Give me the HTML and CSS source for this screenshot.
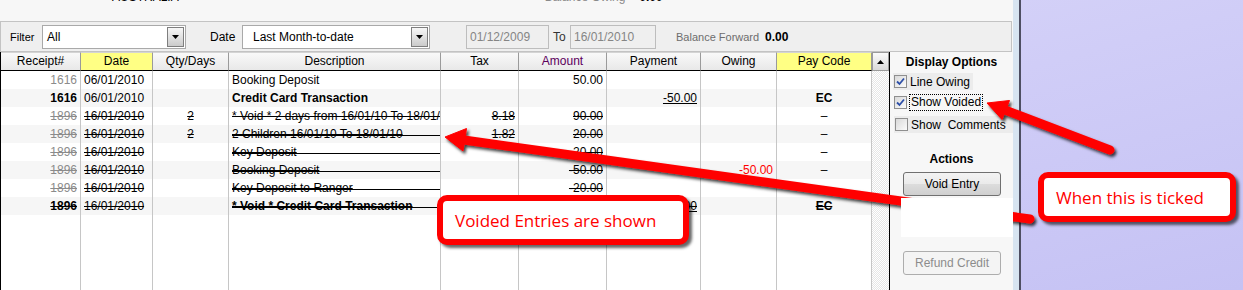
FILE: index.html
```html
<!DOCTYPE html>
<html lang="en">
<head>
    <meta charset="UTF-8">
    <title>Receipts</title>
    <link rel="stylesheet" href="styles.css">
</head>
<body>
<div class="screen">
    <div class="window">
        <div class="topline">
            <span class="country">AUSTRALIA</span>
            <span class="owing-label">Balance Owing</span>
            <span class="owing-value">0.00</span>
        </div>

        <div class="filterbar">
            <span class="lbl lbl-filter">Filter</span>
            <div class="combo combo-filter">
                <span>All</span>
                <span class="drop"><svg width="7" height="4" viewBox="0 0 7 4"><path d="M0 0H7L3.5 4Z" fill="#000"/></svg></span>
            </div>
            <span class="lbl lbl-date">Date</span>
            <div class="combo combo-date">
                <span>Last Month-to-date</span>
                <span class="drop"><svg width="7" height="4" viewBox="0 0 7 4"><path d="M0 0H7L3.5 4Z" fill="#000"/></svg></span>
            </div>
            <div class="datebox datebox-from">01/12/2009</div>
            <span class="lbl lbl-to">To</span>
            <div class="datebox datebox-to">16/01/2010</div>
            <span class="bf-label">Balance Forward</span>
            <span class="bf-value">0.00</span>
        </div>

        <div class="main">
            <div class="grid">
                <table class="ledger">
                    <thead>
                        <tr>
                            <th class="w-rec">Receipt#</th>
                            <th class="w-date hl">Date</th>
                            <th class="w-qty">Qty/Days</th>
                            <th class="w-desc">Description</th>
                            <th class="w-tax">Tax</th>
                            <th class="w-amt purple">Amount</th>
                            <th class="w-pay">Payment</th>
                            <th class="w-owe">Owing</th>
                            <th class="w-code hl">Pay Code</th>
                        </tr>
                    </thead>
                    <tbody>
                        <tr>
                            <td class="num dim">1616</td>
                            <td>06/01/2010</td>
                            <td></td>
                            <td>Booking Deposit</td>
                            <td></td>
                            <td class="num">50.00</td>
                            <td></td>
                            <td></td>
                            <td class="mid"></td>
                        </tr>
                        <tr>
                            <td class="num strong">1616</td>
                            <td>06/01/2010</td>
                            <td></td>
                            <td class="strong">Credit Card Transaction</td>
                            <td></td>
                            <td></td>
                            <td class="num"><span class="ul">-50.00</span></td>
                            <td></td>
                            <td class="mid strong">EC</td>
                        </tr>
                        <tr>
                            <td class="num dim x">1896</td>
                            <td class="x">16/01/2010</td>
                            <td class="mid x">2</td>
                            <td class="x">* Void * 2 days from 16/01/10 To 18/01/10</td>
                            <td class="num x">8.18</td>
                            <td class="num x">90.00</td>
                            <td></td>
                            <td></td>
                            <td class="mid">–</td>
                        </tr>
                        <tr>
                            <td class="num dim x">1896</td>
                            <td class="x">16/01/2010</td>
                            <td class="mid x">2</td>
                            <td class="x to-end">2 Children 16/01/10 To 18/01/10</td>
                            <td class="num x">1.82</td>
                            <td class="num x">20.00</td>
                            <td></td>
                            <td></td>
                            <td class="mid">–</td>
                        </tr>
                        <tr>
                            <td class="num dim x">1896</td>
                            <td class="x">16/01/2010</td>
                            <td></td>
                            <td class="x to-end">Key Deposit</td>
                            <td></td>
                            <td class="num x">20.00</td>
                            <td></td>
                            <td></td>
                            <td class="mid">–</td>
                        </tr>
                        <tr>
                            <td class="num dim x">1896</td>
                            <td class="x">16/01/2010</td>
                            <td></td>
                            <td class="x to-end">Booking Deposit</td>
                            <td></td>
                            <td class="num x">-50.00</td>
                            <td></td>
                            <td class="num red">-50.00</td>
                            <td class="mid">–</td>
                        </tr>
                        <tr>
                            <td class="num dim x">1896</td>
                            <td class="x">16/01/2010</td>
                            <td></td>
                            <td class="x to-end">Key Deposit to Ranger</td>
                            <td></td>
                            <td class="num x">-20.00</td>
                            <td></td>
                            <td></td>
                            <td class="mid">–</td>
                        </tr>
                        <tr>
                            <td class="num strong x">1896</td>
                            <td class="x">16/01/2010</td>
                            <td></td>
                            <td class="strong x to-end">* Void * Credit Card Transaction</td>
                            <td></td>
                            <td></td>
                            <td class="num"><span class="ul x">-50.00</span></td>
                            <td></td>
                            <td class="mid strong x">EC</td>
                        </tr>
                        <tr class="fill">
                            <td></td><td></td><td></td><td></td><td></td><td></td><td></td><td></td><td></td>
                        </tr>
                    </tbody>
                </table>
                <div class="vscroll">
                    <div class="vscroll-up"><svg width="7" height="4" viewBox="0 0 7 4"><path d="M0 4H7L3.5 0Z" fill="#000"/></svg></div>
                </div>
            </div>

            <div class="side">
                <div class="side-title">Display Options</div>
                <div class="opt opt-shaded">
                    <span class="box"><svg width="9" height="9" viewBox="0 0 9 9"><path d="M1 4.5L3.5 7L8 1.5" fill="none" stroke="#2d4fa8" stroke-width="1.8"/></svg></span>
                    <span>Line Owing</span>
                </div>
                <div class="opt opt-voided">
                    <span class="box"><svg width="9" height="9" viewBox="0 0 9 9"><path d="M1 4.5L3.5 7L8 1.5" fill="none" stroke="#2d4fa8" stroke-width="1.8"/></svg></span>
                    <span class="focus">Show Voided</span>
                </div>
                <div class="opt opt-shaded opt-wide">
                    <span class="box"></span>
                    <span class="pre">Show  Comments</span>
                </div>
                <div class="side-title side-title-actions">Actions</div>
                <button class="btn">Void Entry</button>
                <div class="mask"></div>
                <button class="btn btn-off">Refund Credit</button>
            </div>
        </div>
    </div>
    <div class="edge"></div>
</div>

<svg class="arrows" width="1243" height="290" viewBox="0 0 1243 290">
    <defs>
        <filter id="shade" x="-5%" y="-20%" width="115%" height="160%">
            <feDropShadow dx="2" dy="2.5" stdDeviation="1.6" flood-color="#000" flood-opacity="0.75"/>
        </filter>
    </defs>
    <g filter="url(#shade)" fill="#f00" stroke="#f00">
        <line x1="1030" y1="219" x2="464" y2="140" stroke-width="9" stroke-linecap="round"/>
        <polygon points="445,137 466.5,128.5 463,151" stroke-width="1" stroke-linejoin="round"/>
    </g>
    <g filter="url(#shade)" fill="#f00" stroke="#f00">
        <line x1="1110" y1="150" x2="1005" y2="110" stroke-width="9" stroke-linecap="round"/>
        <polygon points="987,103 1009.5,100.5 1002,119.5" stroke-width="1" stroke-linejoin="round"/>
    </g>
</svg>

<div class="callout callout-voided">Voided Entries are shown</div>
<div class="callout callout-ticked">When this is ticked</div>
</body>
</html>
```

FILE: styles.css
```css
* {
    box-sizing: border-box;
}

body {
    margin: 0;
    width: 1243px;
    height: 290px;
    overflow: hidden;
    position: relative;
    font-family: "Liberation Sans", Arial, sans-serif;
    font-size: 12px;
    color: #000;
    background: linear-gradient(165deg, #dedcf9 0%, #d0cdf7 55%, #c5c2f4 100%);
}

.screen {
    display: flex;
    height: 290px;
}

.window {
    width: 1013px;
    background-color: #f7f7f7;
    display: flex;
    flex-direction: column;
}

.edge {
    width: 8px;
    background-color: #d7e4f1;
    border-right: 2px solid #4e4e62;
}

/* cut off header line */
.topline {
    height: 21px;
    overflow: hidden;
    display: flex;
    line-height: 14px;
}

.topline span {
    margin-top: -10px;
}

.country {
    margin-left: 112px;
}

.owing-label {
    margin-left: 366px;
    color: #8a8a8a;
}

.owing-value {
    margin-left: 14px;
    font-weight: bold;
}

/* filter bar */
.filterbar {
    height: 31px;
    width: 1012px;
    border: 1px solid #c3c3c3;
    background-color: #efefef;
    display: flex;
    align-items: center;
    padding-left: 9px;
}

.lbl {
    flex: none;
}

.lbl-filter {
    width: 32px;
    font-size: 11px;
}

.combo {
    flex: none;
    height: 24px;
    border: 1px solid #a9a9a9;
    background-color: #fff;
    display: flex;
    align-items: center;
    justify-content: space-between;
    padding: 0 1px 0 4px;
}

.combo-filter {
    width: 144px;
}

.lbl-date {
    margin-left: 24px;
    width: 32px;
}

.combo-date {
    width: 188px;
    padding-left: 10px;
}

.drop {
    width: 17px;
    height: 20px;
    border: 1px solid #7e7e7e;
    background: linear-gradient(#f7f7f7, #cbcbcb);
    display: flex;
    align-items: center;
    justify-content: center;
}

.datebox {
    flex: none;
    height: 24px;
    border: 1px solid #bdbdbd;
    color: #858585;
    padding-left: 3px;
    line-height: 22px;
}

.datebox-from {
    margin-left: 36px;
    width: 83px;
}

.lbl-to {
    margin-left: 4px;
    width: 17px;
    color: #333;
}

.datebox-to {
    width: 86px;
}

.bf-label {
    margin-left: 20px;
    width: 89px;
    font-size: 11px;
    color: #6d6d6d;
}

.bf-value {
    font-weight: bold;
}

/* ledger grid */
.main {
    display: flex;
    flex: 1;
    min-height: 0;
}

.grid {
    width: 890px;
    display: flex;
    align-items: flex-start;
    border-left: 1px solid #000;
    border-right: 1px solid #000;
    background-color: #fff;
}

.ledger {
    width: 871px;
    flex: none;
    table-layout: fixed;
    border-collapse: separate;
    border-spacing: 0;
}

.ledger th, .ledger td {
    padding: 0 3px;
    white-space: nowrap;
    overflow: hidden;
    border-right: 1px solid #c6c6c6;
}

.ledger thead tr {
    height: 19px;
}

.ledger th {
    font-weight: normal;
    line-height: 17px;
    text-align: center;
    background: linear-gradient(#f9f9f9, #e8e8e8);
    border-top: 1px solid #d4d4d4;
    border-bottom: 1px solid #000;
    border-right-color: #9a9a9a;
}

.ledger th.hl {
    background: #ffff84;
}

.purple {
    color: #5c005c;
}

.w-rec { width: 80px; }
.w-date { width: 72px; }
.w-qty { width: 76px; }
.w-desc { width: 212px; }
.w-tax { width: 78px; }
.w-amt { width: 88px; }
.w-pay { width: 94px; }
.w-owe { width: 76px; }
.w-code { width: 95px; }

.ledger tbody tr {
    height: 18px;
}

.ledger tbody tr:nth-child(even) {
    background-color: #f6f6f6;
}

.ledger td {
    line-height: 18px;
}

.ledger tr.fill {
    height: 80px;
}

.num {
    text-align: right;
}

.mid {
    text-align: center;
}

.dim {
    color: #8b8b8b;
}

.strong {
    font-weight: bold;
}

.red {
    color: #f00;
}

.x {
    text-decoration: line-through;
}

.ul {
    text-decoration: underline;
}

.ul.x {
    text-decoration: underline line-through;
}

.to-end {
    background: linear-gradient(#000, #000) no-repeat 3px 10px / 100% 1px;
}

.vscroll {
    width: 17px;
    height: 100%;
    flex: none;
    background: repeating-conic-gradient(#e6e6e6 0 25%, #fff 0 50%) 0 0 / 2px 2px;
}

.vscroll-up {
    height: 19px;
    border: 1px solid #9a9a9a;
    background: linear-gradient(#fafafa, #d9d9d9);
    display: flex;
    align-items: center;
    justify-content: center;
}

/* options panel */
.side {
    width: 123px;
    display: flex;
    flex-direction: column;
    align-items: flex-start;
}

.side-title {
    align-self: stretch;
    text-align: center;
    font-weight: bold;
    line-height: 14px;
    margin-top: 3px;
}

.side-title-actions {
    margin-top: 19px;
}

.opt {
    display: flex;
    align-items: center;
    gap: 3px;
    height: 17px;
    margin-left: 3px;
    margin-top: 4px;
    padding: 0 3px 0 1px;
}

.opt-shaded {
    background-color: #ececec;
}

.opt-wide {
    align-self: stretch;
    margin-left: 4px;
    margin-top: 5px;
    gap: 3px;
}

.box {
    width: 13px;
    height: 13px;
    flex: none;
    border: 1px solid #8f8f8f;
    background: linear-gradient(135deg, #d9d9d9, #fbfbfb);
    display: flex;
    align-items: center;
    justify-content: center;
}

.focus {
    border: 1px dotted #000;
    line-height: 15px;
    padding: 0 1px;
    margin-left: -1px;
}

.pre {
    white-space: pre;
}

.btn {
    margin-left: 13px;
    margin-top: 6px;
    width: 98px;
    height: 24px;
    padding: 0;
    font: inherit;
    color: #000;
    border: 1px solid #707070;
    border-radius: 3px;
    background: linear-gradient(#f3f3f3 0%, #ebebeb 48%, #dcdcdc 52%, #cfcfcf 100%);
}

.btn-off {
    margin-top: 14px;
    color: #8c8c8c;
    border-color: #adadad;
    background: #f4f4f4;
}

.mask {
    position: relative;
    z-index: 2;
    margin-left: 11px;
    margin-top: 2px;
    width: 112px;
    height: 39px;
    background-color: #fff;
}

/* annotations */
.arrows {
    position: absolute;
    left: 0;
    top: 0;
    z-index: 1;
}

.callout {
    position: absolute;
    z-index: 3;
    height: 50px;
    display: flex;
    align-items: center;
    padding-left: 12px;
    border: 6px solid #f00;
    border-radius: 10px;
    background-color: #fff;
    box-shadow: 3px 3px 3px rgba(0, 0, 0, 0.6);
    color: #f00;
    font-family: "Open Sans", sans-serif;
    font-size: 17px;
}

.callout-voided {
    left: 437px;
    top: 195px;
    width: 252px;
}

.callout-ticked {
    left: 1038px;
    top: 172px;
    width: 198px;
}
```
